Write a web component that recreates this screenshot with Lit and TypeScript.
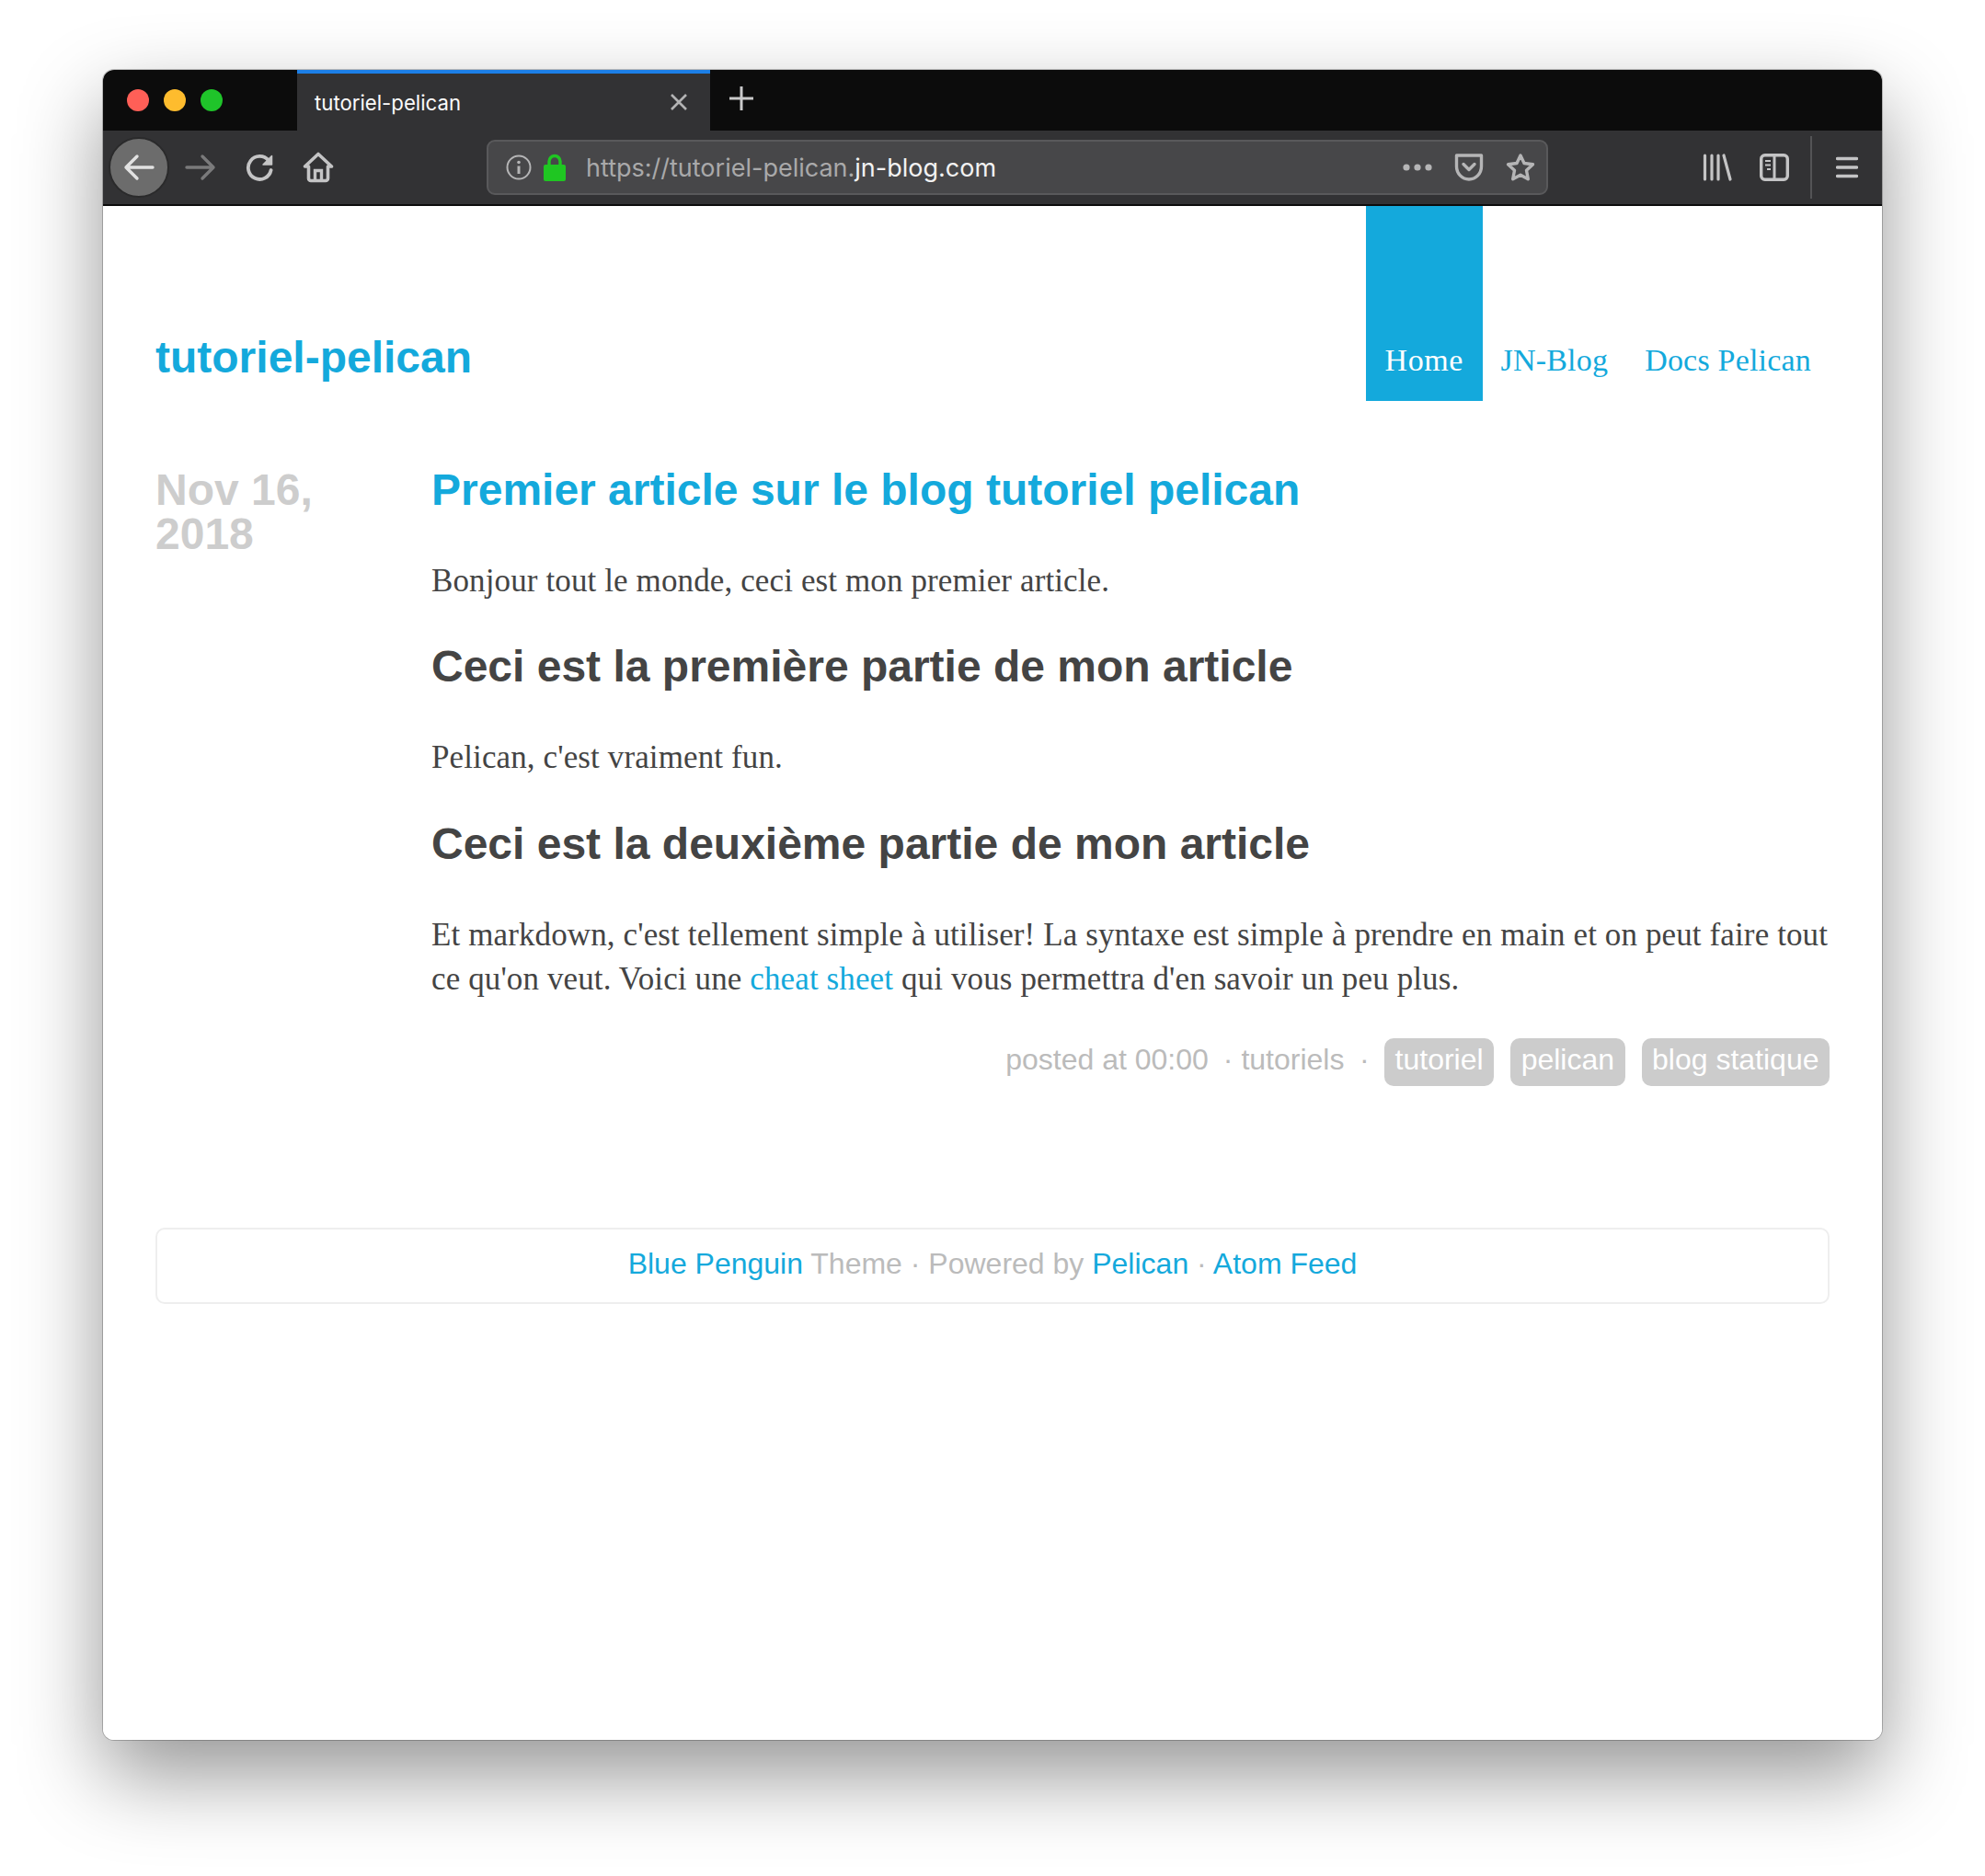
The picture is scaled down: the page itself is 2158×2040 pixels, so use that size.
import { LitElement, html, css } from "lit";
import { customElement } from "lit/decorators.js";

@customElement("app-root")
export class AppRoot extends LitElement {
  static styles = css`
    :host {
      display: block;
      box-sizing: border-box;
      width: 2158px;
      height: 2040px;
      padding: 76px 112px 0;
      background: #fff;
      font-family: "Liberation Sans", Arial, sans-serif;
    }

    .window {
      height: 1816px;
      border-radius: 12px;
      overflow: hidden;
      background: #fff;
    }
    .frame {
      border-radius: 12px;
      box-shadow: 0 38px 90px rgba(0, 0, 0, 0.42), 0 0 0 1px rgba(0, 0, 0, 0.22);
    }

    /* browser chrome */
    .tabbar {
      display: flex;
      align-items: stretch;
      height: 66px;
      background: #0c0c0c;
    }
    .lights {
      display: flex;
      align-items: center;
      gap: 16px;
      width: 211px;
      padding-left: 26px;
      box-sizing: border-box;
    }
    .light {
      width: 24px;
      height: 24px;
      border-radius: 50%;
    }
    .tab {
      display: flex;
      align-items: center;
      justify-content: space-between;
      box-sizing: border-box;
      width: 449px;
      padding: 0 24px 0 19px;
      background: #323234;
      border-top: 4px solid #1c7fe6;
      color: #fbfbfb;
      font: 22.2px "Inter", "Liberation Sans", sans-serif;
    }
    .new-tab {
      display: flex;
      align-items: center;
      margin-left: 20px;
      padding-bottom: 4px;
    }
    .toolbar {
      display: flex;
      align-items: center;
      height: 80px;
      background: #323234;
      border-bottom: 2px solid #0c0c0c;
    }
    .back {
      display: flex;
      align-items: center;
      justify-content: center;
      flex: none;
      box-sizing: border-box;
      width: 66px;
      height: 66px;
      margin-left: 6px;
      border-radius: 50%;
      background: #6c6c6c;
      border: 2px solid #2a2a2b;
    }
    .tool {
      display: flex;
      align-items: center;
      justify-content: center;
      flex: none;
      width: 44px;
    }
    .urlbar {
      display: flex;
      align-items: center;
      flex: none;
      box-sizing: border-box;
      width: 1154px;
      height: 60px;
      margin-left: 161px;
      padding: 0 12px 0 19px;
      background: #474749;
      border: 2px solid #59595b;
      border-radius: 9px;
      font: 27px "Inter", "Liberation Sans", sans-serif;
      color: #f2f2f2;
    }
    .url {
      flex: 1;
      margin-left: 22px;
    }
    .url span {
      color: #a9a9aa;
    }
    .url-icons {
      display: flex;
      align-items: center;
      gap: 24px;
    }
    .side-tools {
      display: flex;
      align-items: center;
      margin-left: 168px;
      gap: 30px;
    }
    .divider {
      width: 2px;
      height: 68px;
      margin: 0 26px 0 23px;
      background: #545456;
    }

    /* page */
    .page {
      padding: 0 57px;
    }
    .site-head {
      display: flex;
      justify-content: space-between;
      height: 212px;
    }
    .site-title {
      margin: 137px 0 0;
      font-size: 48px;
      line-height: 56px;
      font-weight: 700;
      color: #14a9dc;
    }
    nav {
      display: flex;
      font: 34px/1 "Liberation Serif", "Times New Roman", serif;
      letter-spacing: 0.2px;
    }
    nav a {
      display: flex;
      align-items: flex-end;
      padding: 0 20px 27px;
      color: #14a9dc;
    }
    nav a.active {
      padding: 0 20.5px 27px;
      letter-spacing: 0.6px;
      background: #14a9dc;
      color: #fff;
    }

    .entry {
      display: grid;
      grid-template-columns: 300px 1fr;
      margin-top: 73px;
    }
    .date {
      padding-right: 60px;
      font-size: 48px;
      line-height: 48px;
      font-weight: 700;
      color: #cdcdcd;
    }
    h1 {
      margin: 0;
      font-size: 48px;
      line-height: 48px;
      color: #14a9dc;
    }
    h2 {
      margin: 45px 0 0;
      font-size: 48px;
      line-height: 48px;
      color: #444;
    }
    h2.second {
      margin-top: 46px;
    }
    p {
      margin: 51px 0 0;
      font: 35px/48px "Liberation Serif", "Times New Roman", serif;
      letter-spacing: 0.12px;
      color: #444;
    }
    a {
      color: #14a9dc;
    }
    .meta {
      display: flex;
      justify-content: flex-end;
      align-items: flex-start;
      margin-top: 40px;
      font-size: 32px;
      line-height: 47px;
      color: #bbb;
    }
    .category {
      margin-left: 16px;
    }
    .dot-gap {
      margin: 0 16.5px;
    }
    .tag {
      margin-left: 18px;
      padding: 0 11.5px;
      height: 52px;
      border-radius: 10px;
      background: #ccc;
      color: #fff;
    }
    .dot-gap + .tag {
      margin-left: 0;
    }
    footer {
      margin-top: 154px;
      box-sizing: border-box;
      height: 83px;
      border: 2px solid #eee;
      border-radius: 10px;
      text-align: center;
      font-size: 32px;
      line-height: 75px;
      color: #bbb;
    }
  `;

  render() {
    return html`
      <div class="frame">
        <div class="window">
          <div class="tabbar">
            <div class="lights">
              <div class="light" style="background:#ff5f57"></div>
              <div class="light" style="background:#febc2e"></div>
              <div class="light" style="background:#1fc42a"></div>
            </div>
            <div class="tab">
              <span>tutoriel-pelican</span>
              <svg width="20" height="20" viewBox="0 0 20 20"><path d="M2 2 18 18M18 2 2 18" stroke="#b3b3b4" stroke-width="2.6" fill="none"/></svg>
            </div>
            <div class="new-tab">
              <svg width="28" height="28" viewBox="0 0 28 28"><path d="M14 1V27M1 14H27" stroke="#c9c9ca" stroke-width="3" fill="none"/></svg>
            </div>
          </div>

          <div class="toolbar">
            <div class="back">
              <svg width="34" height="30" viewBox="0 0 34 30"><path d="M32 15H3M15 3 3 15 15 27" stroke="#e2e2e2" stroke-width="3.4" stroke-linecap="round" stroke-linejoin="round" fill="none"/></svg>
            </div>
            <div class="tool" style="margin-left:12px">
              <svg width="34" height="30" viewBox="0 0 34 30"><path d="M2 15H31M19 3 31 15 19 27" stroke="#7a7a7b" stroke-width="3.4" stroke-linecap="round" stroke-linejoin="round" fill="none"/></svg>
            </div>
            <div class="tool" style="margin-left:20px">
              <svg width="32" height="32" viewBox="0 0 32 32"><path d="M26 8.500A12.500 12.500 0 1 0 28.600 19" stroke="#c4c4c5" stroke-width="3.800" stroke-linecap="round" fill="none"/><path d="M29.500 3.500V13H20Z" fill="#c4c4c5" stroke="#c4c4c5" stroke-width="1.500" stroke-linejoin="round"/></svg>
            </div>
            <div class="tool" style="margin-left:20px">
              <svg width="34" height="34" viewBox="0 0 34 34"><path d="M2.500 16 17 2.500 31.500 16 27.500 16V29A2.500 2.500 0 0 1 25 31.500H9A2.500 2.500 0 0 1 6.500 29V16Z" stroke="#c4c4c5" stroke-width="3.600" stroke-linejoin="round" fill="none"/><path d="M13.500 31V20.500H20.500V31" stroke="#c4c4c5" stroke-width="3.400" fill="none"/></svg>
            </div>

            <div class="urlbar">
              <svg width="28" height="28" viewBox="0 0 28 28" style="flex:none"><circle cx="14" cy="14" r="12.500" stroke="#b5b5b6" stroke-width="2" fill="none"/><circle cx="14" cy="8.500" r="1.800" fill="#b5b5b6"/><path d="M14 12.500V21" stroke="#b5b5b6" stroke-width="3" fill="none"/></svg>
              <svg width="24" height="30" viewBox="0 0 24 30" style="flex:none;margin-left:13px"><path d="M6 13V8.500A6 6 0 0 1 18 8.500V13" stroke="#1fc622" stroke-width="3.400" fill="none"/><rect y="12" width="24" height="18" rx="2" fill="#1fc622"/></svg>
              <div class="url"><span>https://tutoriel-pelican.</span>jn-blog.com</div>
              <div class="url-icons">
                <svg width="32" height="10" viewBox="0 0 32 10"><circle cx="4" cy="5" r="3.600" fill="#b5b5b6"/><circle cx="16" cy="5" r="3.600" fill="#b5b5b6"/><circle cx="28" cy="5" r="3.600" fill="#b5b5b6"/></svg>
                <svg width="32" height="32" viewBox="0 0 32 32"><path d="M2.500 3H29.500V15A13.500 14 0 0 1 2.500 15Z" stroke="#b5b5b6" stroke-width="3.400" stroke-linejoin="round" fill="none"/><path d="M10 12.500 16 18.500 22 12.500" stroke="#b5b5b6" stroke-width="3.400" stroke-linecap="round" stroke-linejoin="round" fill="none"/></svg>
                <svg width="32" height="32" viewBox="0 0 32 32"><path d="M16 3 20 11.500 29.500 12.800 22.500 19.300 24.300 28.800 16 24.200 7.700 28.800 9.500 19.300 2.500 12.800 12 11.500Z" stroke="#b5b5b6" stroke-width="3.400" stroke-linejoin="round" fill="none"/></svg>
              </div>
            </div>

            <div class="side-tools">
              <svg width="32" height="30" viewBox="0 0 32 30"><path d="M2.500 2V28M10 2V28M17 2V28M23 2 30 28" stroke="#c4c4c5" stroke-width="3.200" stroke-linecap="round" fill="none"/></svg>
              <svg width="32" height="30" viewBox="0 0 32 30"><rect x="1.700" y="1.700" width="28.600" height="26.600" rx="4" stroke="#c4c4c5" stroke-width="3.400" fill="none"/><path d="M16 2V28" stroke="#c4c4c5" stroke-width="3" fill="none"/><path d="M6 8H12M6 12.500H12M8 17H12" stroke="#c4c4c5" stroke-width="2" fill="none"/></svg>
            </div>
            <div class="divider"></div>
            <svg width="24" height="24" viewBox="0 0 24 24"><path d="M1.500 2.500H22.500M1.500 12H22.500M1.500 21.500H22.500" stroke="#c4c4c5" stroke-width="3.400" stroke-linecap="round" fill="none"/></svg>
          </div>

          <div class="page">
            <header class="site-head">
              <div class="site-title">tutoriel-pelican</div>
              <nav>
                <a class="active">Home</a>
                <a>JN-Blog</a>
                <a>Docs Pelican</a>
              </nav>
            </header>

            <section class="entry">
              <div class="date">Nov 16, 2018</div>
              <article>
                <h1>Premier article sur le blog tutoriel pelican</h1>
                <p>Bonjour tout le monde, ceci est mon premier article.</p>
                <h2>Ceci est la première partie de mon article</h2>
                <p>Pelican, c'est vraiment fun.</p>
                <h2 class="second">Ceci est la deuxième partie de mon article</h2>
                <p>
                  Et markdown, c'est tellement simple à utiliser! La syntaxe est simple à prendre en main et on peut
                  faire tout ce qu'on veut. Voici une <a>cheat sheet</a> qui vous permettra d'en savoir un peu plus.
                </p>
                <div class="meta">
                  <span>posted at 00:00</span>
                  <span class="category">·&nbsp;tutoriels</span>
                  <span class="dot-gap">·</span>
                  <span class="tag">tutoriel</span>
                  <span class="tag">pelican</span>
                  <span class="tag">blog statique</span>
                </div>
              </article>
            </section>

            <footer>
              <a>Blue Penguin</a> Theme · Powered by <a>Pelican</a> · <a>Atom Feed</a>
            </footer>
          </div>
        </div>
      </div>
    `;
  }
}
